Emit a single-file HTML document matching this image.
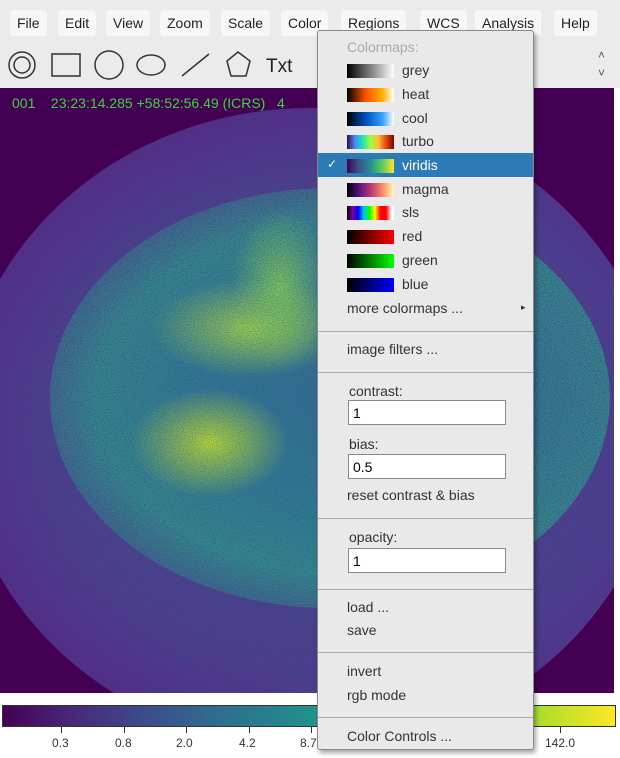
<!DOCTYPE html>
<html><head><style>
*{margin:0;padding:0;box-sizing:border-box}
body{width:620px;height:758px;background:#fff;font-family:"Liberation Sans",sans-serif;position:relative;overflow:hidden}
.top{position:absolute;left:0;top:0;width:620px;height:88px;background:#ebebeb}
.mb{position:absolute;top:10px;height:26px;background:#f7f7f7;border-radius:4px;font-size:14px;line-height:26px;padding:0 7px;color:#222}
.img{position:absolute;left:0;top:88px;width:614px;height:605px;background:#440154;overflow:hidden}
.coord{position:absolute;left:12px;top:95px;color:#3fd23f;font-size:14px}
.menu{position:absolute;left:317px;top:30px;width:217px;height:720px;background:#e9e9e9;border:1px solid #8a8a8a;border-radius:3px;box-shadow:2px 3px 5px rgba(0,0,0,.35);font-size:14px;color:#333}
.it{position:absolute;left:29px}
.sw{position:absolute;left:29px;width:47px;height:14px}
.sep{position:absolute;left:0;width:215px;height:1px;background:#aaa}
.in{position:absolute;left:30px;width:158px;height:25px;background:#fff;border:1px solid #888;font-size:14px;padding:4px 4px;color:#000}
.cb{position:absolute;left:2px;top:705px;width:614px;height:22px;border:1px solid #333;background:linear-gradient(90deg,#440154,#482878,#3e4989,#31688e,#26828e,#1f9e89,#35b779,#6ece58,#b5de2b,#fde725)}
.tk{position:absolute;top:736px;font-size:12px;color:#333}
.tm{position:absolute;top:727px;width:1px;height:6px;background:#333}
</style></head><body>
<div class="top"></div>
<div class="mb" style="left:10px">File</div>
<div class="mb" style="left:58px">Edit</div>
<div class="mb" style="left:106px">View</div>
<div class="mb" style="left:160px">Zoom</div>
<div class="mb" style="left:221px">Scale</div>
<div class="mb" style="left:281px">Color</div>
<div class="mb" style="left:341px">Regions</div>
<div class="mb" style="left:420px">WCS</div>
<div class="mb" style="left:475px">Analysis</div>
<div class="mb" style="left:554px">Help</div>
<svg style="position:absolute;left:0;top:44px" width="330" height="44" fill="none" stroke="#333" stroke-width="1.5">
<circle cx="22" cy="21" r="13"/><circle cx="22" cy="21" r="8"/>
<rect x="52" y="10" width="28" height="22"/>
<circle cx="109" cy="21" r="14"/>
<ellipse cx="151" cy="21" rx="14" ry="10"/>
<line x1="182" y1="32" x2="209" y2="10"/>
<polygon points="238,8 250,17 246,32 231,32 227,17"/>
<text x="266" y="28" fill="#222" stroke="none" font-size="19" font-family="Liberation Sans">Txt</text>
</svg>
<div style="position:absolute;left:598px;top:46px;font-size:12px;color:#555;line-height:18px">˄<br>˅</div>
<div class="img">
<div style="position:absolute;left:-40px;top:20px;width:700px;height:640px;border-radius:50%;background:radial-gradient(ellipse at 55% 50%,#3a5089 0%,#3e4a88 55%,#46337e 80%,rgba(68,1,84,0) 100%)"></div>
<div style="position:absolute;left:50px;top:100px;width:560px;height:420px;border-radius:50%;background:radial-gradient(ellipse at 55% 50%,#2b6f8e 0%,#26808e 40%,#279086 60%,rgba(45,100,140,0.3) 85%,rgba(59,82,139,0) 100%)"></div>
<div style="position:absolute;left:150px;top:190px;width:200px;height:100px;border-radius:50%;background:radial-gradient(#8fd44c,rgba(53,183,121,0) 70%)"></div>
<div style="position:absolute;left:130px;top:300px;width:160px;height:110px;border-radius:50%;background:radial-gradient(#a8db34,rgba(53,183,121,0) 70%)"></div>
<div style="position:absolute;left:230px;top:120px;width:100px;height:160px;border-radius:50%;background:radial-gradient(#6ece58,rgba(53,183,121,0) 70%)"></div>
<svg style="position:absolute;left:0;top:0" width="614" height="605">
<defs><filter id="n" x="0" y="0" width="100%" height="100%"><feTurbulence type="fractalNoise" baseFrequency="0.9" numOctaves="1" seed="3"/><feColorMatrix type="matrix" values="0 0 0 0 0.27  0 0 0 0 0.0  0 0 0 0 0.33  0 0 0 -2.2 1.25"/></filter>
<radialGradient id="m"><stop offset="0" stop-color="#fff" stop-opacity="0.35"/><stop offset="0.6" stop-color="#fff" stop-opacity="0.7"/><stop offset="1" stop-color="#fff" stop-opacity="1"/></radialGradient>
<mask id="mk"><ellipse cx="310" cy="340" rx="350" ry="320" fill="url(#m)"/></mask></defs>
<rect width="614" height="605" filter="url(#n)" mask="url(#mk)"/>
</svg>
</div>
<div class="coord">001&nbsp;&nbsp;&nbsp;&nbsp;23:23:14.285 +58:52:56.49 (ICRS)&nbsp;&nbsp;&nbsp;4</div>
<div class="cb"></div>
<div class="tm" style="left:61px"></div><div class="tk" style="left:52px">0.3</div>
<div class="tm" style="left:124px"></div><div class="tk" style="left:115px">0.8</div>
<div class="tm" style="left:186px"></div><div class="tk" style="left:176px">2.0</div>
<div class="tm" style="left:249px"></div><div class="tk" style="left:239px">4.2</div>
<div class="tm" style="left:311px"></div><div class="tk" style="left:300px">8.7</div>
<div class="tm" style="left:560px"></div><div class="tk" style="left:545px">142.0</div>
<div class="menu">
<div class="it" style="top:8px;color:#aaa">Colormaps:</div>
<div class="sw" style="top:33px;background:linear-gradient(90deg,#000,#fff)"></div><div class="it" style="left:84px;top:31px">grey</div>
<div class="sw" style="top:57px;background:linear-gradient(90deg,#000,#ff5000 40%,#ffb000 75%,#fff)"></div><div class="it" style="left:84px;top:55px">heat</div>
<div class="sw" style="top:81px;background:linear-gradient(90deg,#000,#0050c0 40%,#30a0ff 75%,#fff)"></div><div class="it" style="left:84px;top:79px">cool</div>
<div class="sw" style="top:104px;background:linear-gradient(90deg,#30123b,#4686fb,#1ae4b6,#a2fc3c,#fabb39,#e4460a,#7a0403)"></div><div class="it" style="left:84px;top:102px">turbo</div>
<div style="position:absolute;left:0;top:122px;width:215px;height:24px;background:#2d7bb6"></div>
<div class="it" style="left:9px;top:126px;color:#fff;font-size:12px">✓</div>
<div class="sw" style="top:128px;background:linear-gradient(90deg,#440154,#3b528b,#21918c,#5ec962,#fde725)"></div><div class="it" style="left:84px;top:126px;color:#fff">viridis</div>
<div class="sw" style="top:152px;background:linear-gradient(90deg,#000004,#51127c,#b73779,#fc8961,#fcfdbf)"></div><div class="it" style="left:84px;top:150px">magma</div>
<div class="sw" style="top:175px;background:linear-gradient(90deg,#000,#8000a0,#0000ff,#00c0ff,#00ff00,#ffff00,#ff0000,#ff0000,#fff 95%)"></div><div class="it" style="left:84px;top:173px">sls</div>
<div class="sw" style="top:199px;background:linear-gradient(90deg,#000,#f00)"></div><div class="it" style="left:84px;top:197px">red</div>
<div class="sw" style="top:223px;background:linear-gradient(90deg,#000,#0f0)"></div><div class="it" style="left:84px;top:221px">green</div>
<div class="sw" style="top:247px;background:linear-gradient(90deg,#000,#00f)"></div><div class="it" style="left:84px;top:245px">blue</div>
<div class="it" style="top:269px">more colormaps ...</div><div class="it" style="left:203px;top:271px;font-size:9px">▸</div>
<div class="sep" style="top:300px"></div>
<div class="it" style="top:310px">image filters ...</div>
<div class="sep" style="top:341px"></div>
<div class="it" style="left:31px;top:352px">contrast:</div>
<div class="in" style="top:369px">1</div>
<div class="it" style="left:31px;top:405px">bias:</div>
<div class="in" style="top:423px">0.5</div>
<div class="it" style="top:456px">reset contrast &amp; bias</div>
<div class="sep" style="top:487px"></div>
<div class="it" style="left:31px;top:498px">opacity:</div>
<div class="in" style="top:517px">1</div>
<div class="sep" style="top:558px"></div>
<div class="it" style="top:568px">load ...</div>
<div class="it" style="top:591px">save</div>
<div class="sep" style="top:621px"></div>
<div class="it" style="top:632px">invert</div>
<div class="it" style="top:656px">rgb mode</div>
<div class="sep" style="top:686px"></div>
<div class="it" style="top:697px">Color Controls ...</div>
</div>
</body></html>
